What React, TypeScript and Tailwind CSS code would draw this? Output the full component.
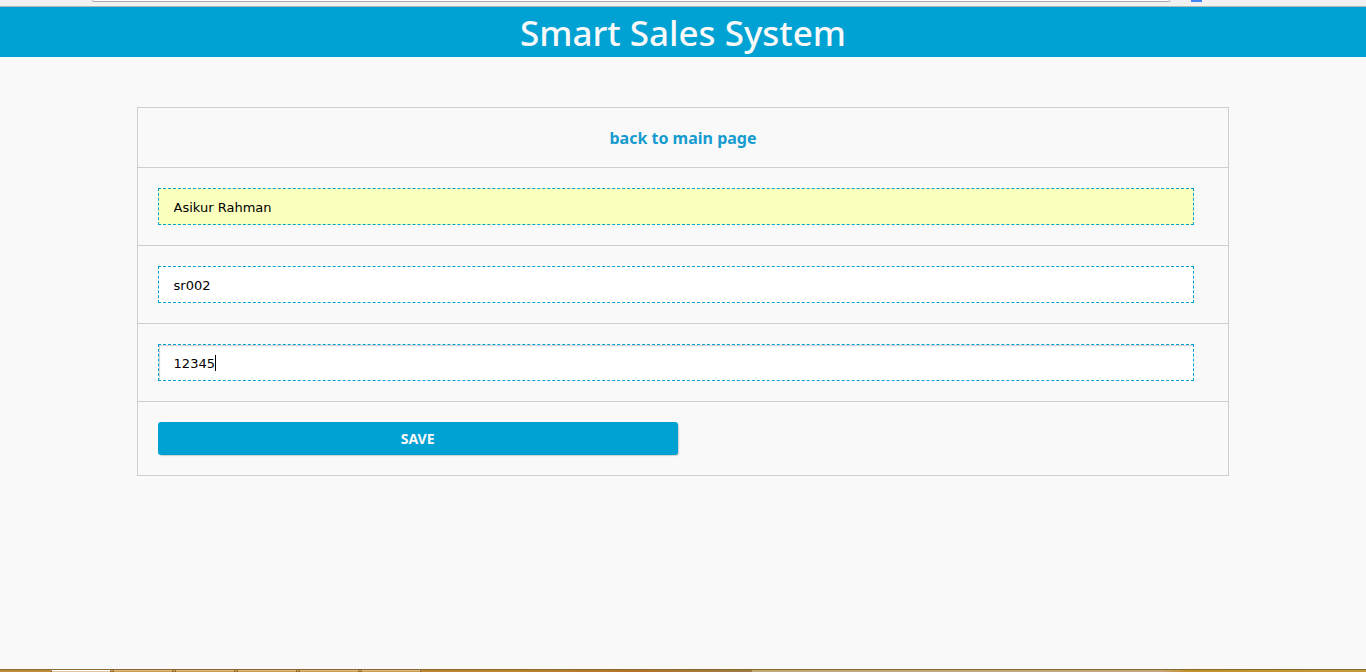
import { useState } from "react";

const fieldClass =
  "block h-[37px] w-full border border-dashed border-[#00a2d3] px-[15px] pt-[2px] font-['DejaVu_Sans',sans-serif] text-[13px] text-black outline-none";

function BrowserEdge() {
  return (
    <div className="flex h-[7px] items-start border-b border-[#b5b5b5] bg-[#f1f1f1]" aria-hidden="true">
      <div className="ml-[92px] h-[2px] flex-1 rounded-b-[2px] border-x border-b border-[#a9a9a9] bg-white" />
      <div className="ml-[21px] mr-[164px] h-[2px] w-[11px] bg-[#4285f4]" />
    </div>
  );
}

function Taskbar() {
  return (
    <div
      className="mt-auto flex h-[3px] shrink-0 gap-[2px] border-t border-[#8a6830] bg-[linear-gradient(90deg,#bd8c38_0%,#b9842c_38%,#b37228_47%,#a67a38_51%,#9b7c43_55%,#c2a976_55.1%,#c2a678_85%,#c29028_87%,#c39c3a_100%)] pl-[51px]"
      aria-hidden="true"
    >
      <div className="w-[60px] border-x border-t border-x-[#7a5a2a] border-t-white bg-[#dfc7a0]" />
      {[1, 2, 3, 4, 5].map((n) => (
        <div key={n} className="w-[60px] border-x border-t border-x-[#7a5a2a] border-t-[#dcb97c] bg-[#c99d55]" />
      ))}
    </div>
  );
}

export default function App() {
  const [name, setName] = useState("Asikur Rahman");
  const [code, setCode] = useState("sr002");
  const [pin, setPin] = useState("12345");

  return (
    <div className="flex min-h-screen flex-col bg-[#f9f9f9] font-['Noto_Sans',sans-serif]">
      <BrowserEdge />
      <header className="flex h-[50px] items-center justify-center bg-[#00a2d3] pt-[2px]">
        <h1 className="text-[35px] font-medium leading-[48px] text-[#f9f9f9]">Smart Sales System</h1>
      </header>
      <main className="mx-auto mb-10 mt-[50px] w-4/5">
        <form
          className="divide-y divide-[#cecece] border border-[#cecece]"
          onSubmit={(event) => event.preventDefault()}
        >
          <div className="flex h-[60px] items-center justify-center">
            <a href="#main" className="text-base font-bold text-[#159bcf]">
              back to main page
            </a>
          </div>
          <div className="py-5 pl-5 pr-[34px]">
            <input
              aria-label="Name"
              className={`${fieldClass} bg-[#faffbd]`}
              value={name}
              onChange={(event) => setName(event.target.value)}
            />
          </div>
          <div className="py-5 pl-5 pr-[34px]">
            <input
              aria-label="Code"
              className={`${fieldClass} bg-white`}
              value={code}
              onChange={(event) => setCode(event.target.value)}
            />
          </div>
          <div className="relative py-5 pl-5 pr-[34px]">
            <input
              aria-label="Password"
              className={`${fieldClass} bg-white shadow-[inset_1px_1px_1px_#cecece]`}
              value={pin}
              onChange={(event) => setPin(event.target.value)}
            />
            <span className="absolute left-[77px] top-[31px] h-4 w-px bg-black" aria-hidden="true" />
          </div>
          <div className="p-5">
            <button
              type="submit"
              className="block h-[33px] w-[49.5%] rounded-[3px] bg-[#00a2d3] text-sm font-bold text-[#f9f9f9] shadow-[1px_1px_1px_#cecece]"
            >
              SAVE
            </button>
          </div>
        </form>
      </main>
      <Taskbar />
    </div>
  );
}
